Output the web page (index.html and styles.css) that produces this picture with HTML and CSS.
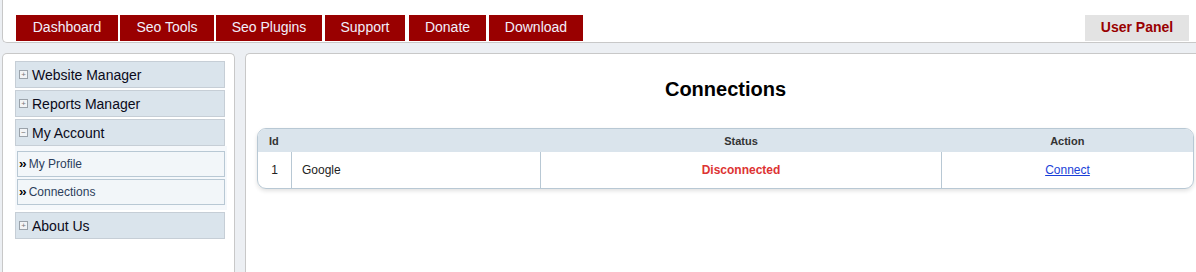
FILE: index.html
```html
<!DOCTYPE html>
<html>
<head>
<meta charset="utf-8">
<link rel="stylesheet" href="styles.css">
</head>
<body>
<div class="header">
  <ul class="nav">
    <li>Dashboard</li>
    <li>Seo Tools</li>
    <li>Seo Plugins</li>
    <li>Support</li>
    <li>Donate</li>
    <li>Download</li>
  </ul>
  <div class="userpanel">User Panel</div>
</div>
<div class="main">
  <div class="sidebar">
    <div class="menu-item"><span class="box">+</span>Website Manager</div>
    <div class="menu-item"><span class="box">+</span>Reports Manager</div>
    <div class="menu-item"><span class="box">−</span>My Account</div>
    <div class="submenu">
      <div class="sub-item"><span class="arr">››</span>My Profile</div>
      <div class="sub-item"><span class="arr">››</span>Connections</div>
    </div>
    <div class="menu-item"><span class="box">+</span>About Us</div>
  </div>
  <div class="content">
    <h1 class="title">Connections</h1>
    <div class="tablewrap">
      <table class="list">
        <thead>
          <tr><th class="c-id">Id</th><th class="c-name"></th><th class="c-status">Status</th><th class="c-action">Action</th></tr>
        </thead>
        <tbody>
          <tr><td class="c-id">1</td><td class="c-name">Google</td><td class="c-status"><span class="red">Disconnected</span></td><td class="c-action"><a href="#">Connect</a></td></tr>
        </tbody>
      </table>
    </div>
  </div>
</div>
</body>
</html>
```
FILE: styles.css
```css
html, body { margin: 0; padding: 0; }
body {
  background: #eceff3;
  font-family: "Liberation Sans", Arial, sans-serif;
  width: 1196px;
  height: 272px;
  overflow: hidden;
}
.header {
  margin-left: 2px;
  height: 41px;
  background: #fff;
  border: 1px solid #c8c8c8;
  border-top: none;
  border-right: none;
  border-bottom-left-radius: 5px;
  display: flex;
  justify-content: space-between;
  align-items: flex-end;
  padding: 0 7px 1px 13px;
}
.nav {
  list-style: none;
  margin: 0;
  padding: 0;
  display: flex;
  gap: 2px;
}
.nav li {
  background: #990000;
  color: #f2eefa;
  font-size: 14px;
  height: 26px;
  line-height: 25px;
  white-space: nowrap;
  text-align: center;
}
.nav li:nth-child(1) { width: 102px; }
.nav li:nth-child(2) { width: 94px; }
.nav li:nth-child(3) { width: 106px; }
.nav li:nth-child(4) { width: 80px; margin-left: 1px; }
.nav li:nth-child(5) { width: 77px; margin-left: 2px; }
.nav li:nth-child(6) { width: 94px; margin-left: 1px; }
.userpanel {
  background: #e3e3e3;
  color: #990000;
  font-weight: bold;
  font-size: 14px;
  height: 26px;
  line-height: 25px;
  width: 104px;
  text-align: center;
}
.main {
  display: flex;
  gap: 10px;
  margin-top: 10px;
  padding-left: 2px;
  height: 219px;
}
.sidebar {
  width: 219px;
  height: 212px;
  background: #fff;
  border: 1px solid #c8c8c8;
  border-bottom: none;
  border-radius: 5px 5px 0 0;
  padding: 7px 0 0 12px;
}
.menu-item {
  width: 208px;
  height: 25px;
  background: #dae4ec;
  border: 1px solid #c6ced6;
  margin-bottom: 2px;
  font-size: 14px;
  color: #0a0a1a;
  display: flex;
  align-items: center;
}
.box {
  display: inline-block;
  width: 7px;
  height: 7px;
  border: 1px solid #9aa2aa;
  background: #f2f4f6;
  font-size: 8px;
  line-height: 7px;
  text-align: center;
  color: #777;
  margin: 0 4px 0 3px;
  overflow: hidden;
}
.submenu {
  width: 210px;
  margin: -2px 0 2px 0;
  padding: 5px 0 3px 2px;
  background: #f5f8fb;
}
.sub-item {
  width: 206px;
  height: 24px;
  border: 1px solid #b8c8d4;
  background: #f2f6f9;
  font-size: 12px;
  color: #2c3e5c;
  display: flex;
  align-items: center;
  margin-bottom: 2px;
}
.arr {
  color: #000;
  font-weight: bold;
  font-size: 13px;
  letter-spacing: -1px;
  margin: -2px 3px 0 1px;
}
.content {
  flex: 1;
  background: #fff;
  border: 1px solid #c8c8c8;
  border-right: none;
  border-bottom: none;
  border-top-left-radius: 5px;
  padding: 0 2px 0 11px;
}
.title {
  margin: 23px 0 0 0;
  text-align: center;
  font-size: 20px;
  font-weight: bold;
  color: #000;
  height: 24px;
  line-height: 24px;
}
.tablewrap {
  margin-top: 27px;
  border: 1px solid #b8c8d4;
  border-radius: 9px;
  overflow: hidden;
  box-shadow: 0 2px 4px rgba(0,0,0,0.12);
}
.list {
  width: 100%;
  border-collapse: collapse;
  font-size: 12px;
}
.list th {
  background: #dae4ec;
  height: 23px;
  font-size: 11px;
  font-weight: bold;
  color: #333;
  padding: 0;
}
.list td {
  height: 36px;
  padding: 0;
  color: #222;
  border-left: 1px solid #b8c8d4;
}
.list td:first-child { border-left: none; }
.c-id { width: 33px; text-align: center; }
th.c-id { text-align: left; padding-left: 11px !important; width: 22px; }
.c-name { width: 238px; }
td.c-name { padding-left: 10px !important; }
.c-status { width: 400px; text-align: center; }
.c-action { text-align: center; }
.red { color: #dd3333; font-weight: bold; }
.list a { color: #1a3fd8; text-decoration: underline; }
```
